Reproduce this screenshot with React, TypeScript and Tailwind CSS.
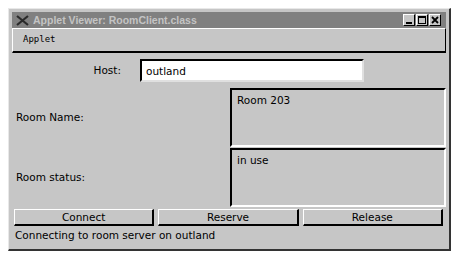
import { useState } from "react";

const sans = { fontFamily: '"DejaVu Sans", "Liberation Sans", sans-serif' };

function AwtButton({ label }: { label: string }) {
  return (
    <button
      className="flex-1 h-[17px] bg-[#c6c6c6] border-t border-l border-white border-r-2 border-b-2 border-r-black border-b-black text-[10.5px] leading-[13px] text-black"
      style={sans}
    >
      {label}
    </button>
  );
}

export default function App() {
  const [host, setHost] = useState("outland");

  return (
    <div className="w-[460px] h-[263px] bg-white pt-[8px] pl-[8px]">
      {/* window frame */}
      <div className="w-[443px] h-[243px] bg-[#c6c6c6] border-t border-l border-[#e8e8e8] border-r-2 border-b-2 border-r-[#333] border-b-[#333] p-[3px] flex flex-col">
        {/* title bar */}
        <div className="h-[16px] bg-[#808080] flex items-center pl-[4px] pr-[5px] shrink-0">
          <svg width="13" height="11" viewBox="0 0 13 11" className="mr-[4px]">
            <path d="M1 1 L12 10 M12 1 L1 10" stroke="#2a2a2a" strokeWidth="2.2" />
          </svg>
          <span
            className="text-[10.5px] leading-[13px] font-bold text-[#c4c4c4]"
            style={{ fontFamily: '"Liberation Sans", Arial, sans-serif' }}
          >
            Applet Viewer: RoomClient.class
          </span>
          <div className="ml-auto flex gap-[1px]">
            <div className="w-[12px] h-[12px] bg-[#c6c6c6] border-t border-l border-white border-r border-b border-r-black border-b-black flex items-end justify-center pb-[1px]">
              <div className="w-[6px] h-[2px] bg-black" />
            </div>
            <div className="w-[12px] h-[12px] bg-[#c6c6c6] border-t border-l border-white border-r border-b border-r-black border-b-black flex items-center justify-center">
              <div className="w-[8px] h-[8px] border border-black border-t-2" />
            </div>
            <div className="w-[12px] h-[12px] bg-[#c6c6c6] border-t border-l border-white border-r border-b border-r-black border-b-black flex items-center justify-center">
              <svg width="8" height="8" viewBox="0 0 8 8">
                <path d="M1 1 L7 7 M7 1 L1 7" stroke="black" strokeWidth="1.8" />
              </svg>
            </div>
          </div>
        </div>

        {/* menu bar */}
        <div className="h-[25px] shrink-0 border-t border-l border-white border-r border-r-black border-b-[2px] border-b-black flex items-center pl-[10px]">
          <span
            className="text-[9px] text-black"
            style={{ fontFamily: '"DejaVu Sans Mono", "Liberation Mono", monospace' }}
          >
            Applet
          </span>
        </div>

        {/* applet panel */}
        <div className="flex-1 flex flex-col pl-[3px] pt-[6px]" style={sans}>
          {/* host row */}
          <div className="flex items-center h-[23px]">
            <div className="w-[106px] text-right text-[10.5px] text-black">Host:</div>
            <div className="w-[19px]" />
            <input
              value={host}
              onChange={(e) => setHost(e.target.value)}
              className="w-[224px] h-[23px] bg-white border-2 border-black border-b-[#e0e0e0] border-r-[#e0e0e0] px-[4px] text-[10.5px] text-black outline-none"
              style={sans}
            />
          </div>

          {/* room name */}
          <div className="flex mt-[6px] h-[59px]">
            <div className="flex-1 flex items-center text-[10.5px] text-black pl-[1px]">Room Name:</div>
            <div className="w-[216px] h-[59px] bg-[#c6c6c6] border-2 border-t-black border-l-black border-b-white border-r-white px-[5px] pt-[3px] text-[10.5px] text-black">
              Room 203
            </div>
          </div>

          {/* room status */}
          <div className="flex mt-[1px] h-[59px]">
            <div className="flex-1 flex items-center text-[10.5px] text-black pl-[1px]">Room status:</div>
            <div className="w-[216px] h-[59px] bg-[#c6c6c6] border-2 border-t-black border-l-black border-b-white border-r-white px-[5px] pt-[3px] text-[10.5px] text-black">
              in use
            </div>
          </div>

          {/* buttons */}
          <div className="flex gap-[4px] mt-[2px] ml-[-1px] mr-[3px]">
            <AwtButton label="Connect" />
            <AwtButton label="Reserve" />
            <AwtButton label="Release" />
          </div>

          <div className="text-[10.5px] text-black mt-[2px] pl-[0px]">Connecting to room server on outland</div>
        </div>
      </div>
    </div>
  );
}
